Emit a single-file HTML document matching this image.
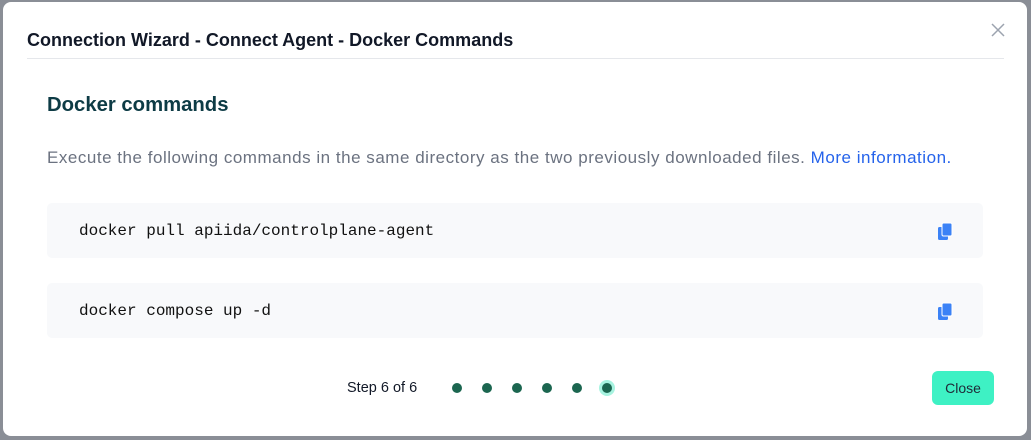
<!DOCTYPE html>
<html><head><style>
body{margin:0;width:1031px;height:440px;background:#8a8e96;position:relative;overflow:hidden;font-family:"Liberation Sans",sans-serif}
.m{position:absolute;left:3px;top:2px;width:1024px;height:434px;background:#fff;border-radius:8px}
.t{position:absolute;left:27px;top:30px;font-size:18px;font-weight:bold;color:#111827}
.x{position:absolute;left:990px;top:22px}
.hr{position:absolute;left:27px;top:58px;width:977px;height:1px;background:#e5e7eb}
h2{position:absolute;left:47px;top:94px;margin:0;font-size:20.3px;color:#0d3b45}
p{position:absolute;left:47px;top:148px;margin:0;font-size:17px;letter-spacing:0.52px;color:#6b7280}
p a{color:#2563eb;text-decoration:none}
.c{position:absolute;left:47px;width:936px;height:55px;background:#f8f9fb;border-radius:5px}
.c span{position:absolute;left:32px;top:19px;font-family:"Liberation Mono",monospace;font-size:16px;color:#111}
.c svg{position:absolute;left:889px;top:19px}
.s{position:absolute;left:347px;top:380px;font-size:14.5px;color:#111827}
.d{position:absolute;top:383px;width:10px;height:10px;border-radius:50%;background:#1b6650}
.b{position:absolute;left:932px;top:371px;width:62px;height:34px;background:#3ef1c4;border-radius:6px;font-size:14px;color:#1f2937;text-align:center;line-height:34px}
</style></head><body>
<div class="m"></div>
<div class="t">Connection Wizard - Connect Agent - Docker Commands</div>
<svg class="x" width="16" height="16"><path d="M2 2L14 14M14 2L2 14" stroke="#9ca3af" stroke-width="1.5"/></svg>
<div class="hr"></div>
<h2>Docker commands</h2>
<p>Execute the following commands in the same directory as the two previously downloaded files. <a>More information.</a></p>
<div class="c" style="top:203px"><span>docker pull apiida/controlplane-agent</span><svg width="18" height="20" viewBox="0 0 18 20"><rect x="2" y="5" width="10" height="13" rx="1.5" fill="#3b82f6"/><rect x="6" y="1" width="10" height="13" rx="1.5" fill="#3b82f6" stroke="#fff" stroke-width="1"/></svg></div>
<div class="c" style="top:283px"><span>docker compose up -d</span><svg width="18" height="20" viewBox="0 0 18 20"><rect x="2" y="5" width="10" height="13" rx="1.5" fill="#3b82f6"/><rect x="6" y="1" width="10" height="13" rx="1.5" fill="#3b82f6" stroke="#fff" stroke-width="1"/></svg></div>
<div class="s">Step 6 of 6</div>
<div class="d" style="left:452px"></div><div class="d" style="left:482px"></div><div class="d" style="left:512px"></div><div class="d" style="left:542px"></div><div class="d" style="left:572px"></div><div class="d" style="left:602px;box-shadow:0 0 0 3px #a7f3e0"></div>
<div class="b">Close</div>
</body></html>
